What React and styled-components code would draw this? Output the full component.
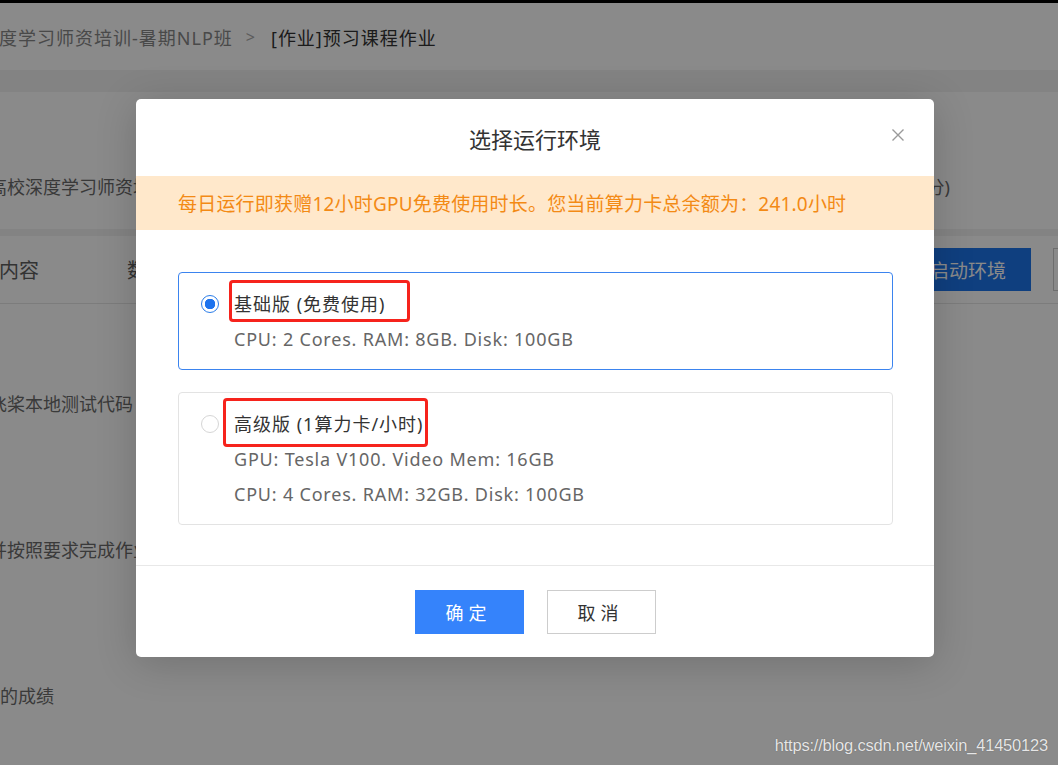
import styled, { createGlobalStyle } from "styled-components";

const GlobalStyle = createGlobalStyle`
  * { box-sizing: border-box; }
  body {
    margin: 0;
    font-family: "Noto Sans", "Noto Sans CJK SC", sans-serif;
    background: #fff;
  }
`;

const options = [
  {
    id: "basic",
    title: "基础版 (免费使用)",
    specs: ["CPU: 2 Cores. RAM: 8GB. Disk: 100GB"],
    mark: { left: -5, top: -10, width: 181, height: 42 },
  },
  {
    id: "pro",
    title: "高级版 (1算力卡/小时)",
    specs: ["GPU: Tesla V100. Video Mem: 16GB", "CPU: 4 Cores. RAM: 32GB. Disk: 100GB"],
    mark: { left: -11, top: -12, width: 205, height: 49 },
  },
];

const App = () => {
  const selected = "basic";

  return (
    <>
      <GlobalStyle />
      <Page>
        <TopStrip />
        <Header>
          <Crumb>度学习师资培训-暑期NLP班</Crumb>
          <Sep>&gt;</Sep>
          <Crumb $current>[作业]预习课程作业</Crumb>
        </Header>
        <Band $h={22} />
        <InfoRow>
          <InfoText>高校深度学习师资培训-暑期NLP班</InfoText>
          <InfoText>(满分100分)</InfoText>
        </InfoRow>
        <Band $h={7} />
        <TabRow>
          <Tabs>
            <Tab>内容</Tab>
            <Tab>数据集</Tab>
          </Tabs>
          <TabActions>
            <StartButton>启动环境</StartButton>
            <GhostButton>更多</GhostButton>
          </TabActions>
        </TabRow>
        <Steps>
          <Step $shift={-11}>飞桨本地测试代码</Step>
          <Step $shift={-11}>并按照要求完成作业</Step>
          <Step $shift={0}>的成绩</Step>
        </Steps>

        <Overlay>
          <Modal>
            <ModalHeader>
              <ModalTitle>选择运行环境</ModalTitle>
              <CloseButton aria-label="关闭">
                <svg width="14" height="14" viewBox="0 0 14 14">
                  <path d="M1.5 1.5 L12.5 12.5 M12.5 1.5 L1.5 12.5" stroke="#9a9a9a" strokeWidth="1.4" fill="none" />
                </svg>
              </CloseButton>
            </ModalHeader>
            <Notice>每日运行即获赠12小时GPU免费使用时长。您当前算力卡总余额为：241.0小时</Notice>
            <ModalBody>
              {options.map((opt) => (
                <OptionCard key={opt.id} $active={opt.id === selected}>
                  <OptionHead>
                    <Radio $checked={opt.id === selected} />
                    <OptionTitle>
                      {opt.title}
                      <Mark
                        style={{
                          left: opt.mark.left,
                          top: opt.mark.top,
                          width: opt.mark.width,
                          height: opt.mark.height,
                        }}
                      />
                    </OptionTitle>
                  </OptionHead>
                  <SpecList>
                    {opt.specs.map((s) => (
                      <Spec key={s}>{s}</Spec>
                    ))}
                  </SpecList>
                </OptionCard>
              ))}
            </ModalBody>
            <ModalFooter>
              <Button $primary>确定</Button>
              <Button>取消</Button>
            </ModalFooter>
          </Modal>
          <Watermark>https://blog.csdn.net/weixin_41450123</Watermark>
        </Overlay>
      </Page>
    </>
  );
};

export default App;

const Page = styled.div`
  position: relative;
  width: 1058px;
  height: 765px;
  overflow: hidden;
  background: #fff;
`;

const TopStrip = styled.div`
  height: 3px;
  background: #000;
`;

const Header = styled.div`
  height: 67px;
  display: flex;
  align-items: center;
  margin-left: -1px;
  font-size: 18px;
  letter-spacing: 1px;
`;

const Crumb = styled.span`
  color: ${(p) => (p.$current ? "#333" : "#888")};
`;

const Sep = styled.span`
  color: #aaa;
  margin: 0 15px 0 13px;
  font-size: 16px;
`;

const Band = styled.div`
  height: ${(p) => p.$h}px;
  background: #f2f2f2;
`;

const InfoRow = styled.div`
  height: 137px;
  display: flex;
  justify-content: space-between;
  align-items: flex-start;
  padding: 83px 108px 0 0;
  margin-left: -11px;
  font-size: 18px;
`;

const InfoText = styled.span`
  color: #6a6a6a;
  line-height: 24px;
`;

const TabRow = styled.div`
  height: 68px;
  display: flex;
  justify-content: space-between;
  align-items: center;
  border-bottom: 1px solid #e6e6e6;
`;

const Tabs = styled.div`
  display: flex;
  gap: 88px;
  margin-left: -1px;
`;

const Tab = styled.span`
  font-size: 20px;
  color: #5e5e5e;
`;

const TabActions = styled.div`
  display: flex;
  gap: 22px;
  margin-right: -55px;
`;

const StartButton = styled.div`
  width: 126px;
  height: 43px;
  background: #1c75eb;
  color: #fff;
  font-size: 19px;
  display: flex;
  align-items: center;
  justify-content: center;
`;

const GhostButton = styled.div`
  width: 60px;
  height: 43px;
  border: 1px solid #ccc;
  color: #666;
  font-size: 18px;
  display: flex;
  align-items: center;
  justify-content: center;
`;

const Steps = styled.div`
  display: flex;
  flex-direction: column;
  gap: 122px;
  padding-top: 88px;
`;

const Step = styled.div`
  font-size: 18px;
  line-height: 24px;
  color: #6b6b6b;
  margin-left: ${(p) => p.$shift}px;
`;

const Overlay = styled.div`
  position: absolute;
  inset: 0;
  background: rgba(0, 0, 0, 0.46);
  padding: 99px 0 0 136px;
`;

const Modal = styled.div`
  width: 798px;
  height: 558px;
  background: #fff;
  border-radius: 5px;
  box-shadow: 0 6px 40px rgba(0, 0, 0, 0.18);
  display: flex;
  flex-direction: column;
  overflow: hidden;
`;

const ModalHeader = styled.div`
  position: relative;
  height: 77px;
  display: flex;
  align-items: center;
  justify-content: center;
`;

const ModalTitle = styled.h2`
  margin: 0;
  font-size: 22px;
  font-weight: 400;
  color: #333;
`;

const CloseButton = styled.button`
  position: absolute;
  right: 29px;
  top: 29px;
  width: 14px;
  height: 14px;
  padding: 0;
  border: 0;
  background: none;
  display: flex;
`;

const Notice = styled.div`
  height: 54px;
  display: flex;
  align-items: center;
  padding-left: 42px;
  background: #ffe8cb;
  color: #f38a15;
  font-size: 19px;
  letter-spacing: 0.2px;
`;

const ModalBody = styled.div`
  flex: 1;
  display: flex;
  flex-direction: column;
  gap: 22px;
  padding: 42px 41px 0 42px;
  border-bottom: 1px solid #e8e8e8;
`;

const OptionCard = styled.div`
  border: 1px solid ${(p) => (p.$active ? "#3b84ef" : "#e3e3e3")};
  border-radius: 4px;
  padding: 17px 0 12px 55px;
`;

const OptionHead = styled.div`
  position: relative;
  display: flex;
  align-items: center;
  height: 28px;
`;

const Radio = styled.span`
  position: absolute;
  left: -33px;
  top: 5px;
  width: 18px;
  height: 18px;
  border-radius: 50%;
  border: 1px solid ${(p) => (p.$checked ? "#2b7de9" : "#d6d6d6")};
  background: ${(p) => (p.$checked ? "radial-gradient(circle, #1f74ee 0 5px, #fff 5.5px)" : "#fff")};
`;

const OptionTitle = styled.span`
  position: relative;
  font-size: 18px;
  letter-spacing: 1px;
  color: #333;
  line-height: 28px;
`;

const Mark = styled.span`
  position: absolute;
  border: 3px solid #f6231c;
  border-radius: 4px;
  pointer-events: none;
`;

const SpecList = styled.div`
  margin-top: 4px;
`;

const Spec = styled.div`
  font-size: 18px;
  letter-spacing: 0.8px;
  line-height: 35px;
  color: #666;
`;

const ModalFooter = styled.div`
  height: 91px;
  display: flex;
  align-items: center;
  justify-content: center;
  gap: 23px;
`;

const Button = styled.button`
  width: 109px;
  height: 44px;
  font-family: inherit;
  font-size: 18px;
  letter-spacing: 5px;
  padding-left: 5px;
  cursor: pointer;
  border: 1px solid ${(p) => (p.$primary ? "#3583fb" : "#cdcdcd")};
  background: ${(p) => (p.$primary ? "#3583fb" : "#fff")};
  color: ${(p) => (p.$primary ? "#fff" : "#333")};
`;

const Watermark = styled.div`
  position: absolute;
  right: 10px;
  bottom: 10px;
  font-family: "Liberation Sans", sans-serif;
  font-size: 16.5px;
  letter-spacing: -0.2px;
  color: #e6e6e6;
  text-shadow: 0 0 1px rgba(0, 0, 0, 0.4);
`;
